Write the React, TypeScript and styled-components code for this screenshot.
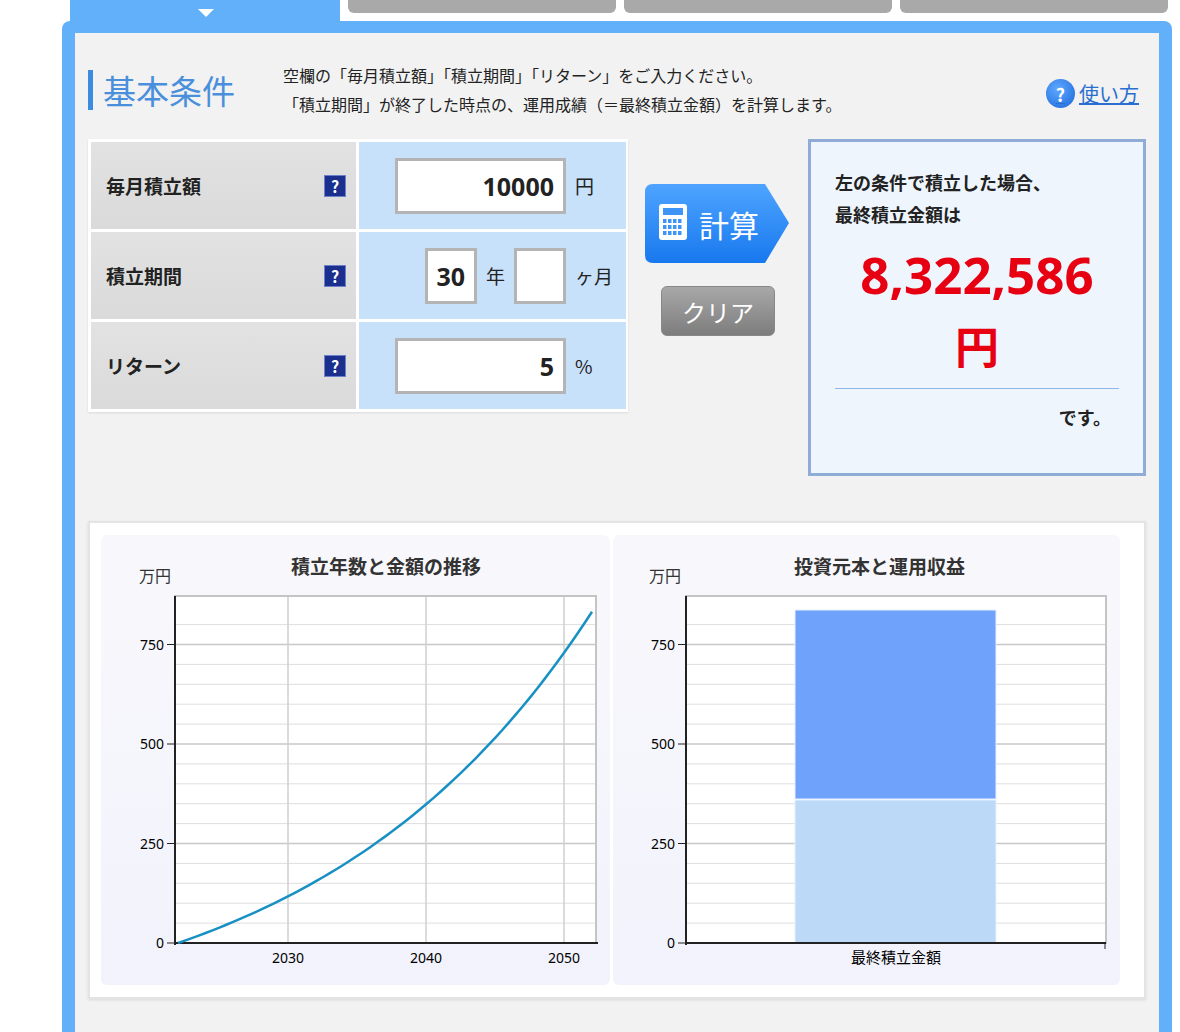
import React from "react";
import styled, { createGlobalStyle } from "styled-components";

const G = createGlobalStyle`
  body { margin:0; background:#fff; font-family: "Noto Sans CJK JP", "Noto Sans", sans-serif; color:#222; }
`;
const Page = styled.div`width:1180px;height:1032px;overflow:hidden;position:relative;`;
const Tabs = styled.div`display:flex;gap:8px;padding-left:70px;height:21px;`;
const Tab = styled.div<{ $active?: boolean }>`
  width:${p => (p.$active ? 270 : 268)}px;
  height:${p => (p.$active ? 21 : 13)}px;
  background:${p => (p.$active ? "#63b0fa" : "#a9a9a9")};
  border-radius:${p => (p.$active ? "0" : "0 0 6px 6px")};
  position:relative;
`;
const Tri = styled.div`position:absolute;left:128px;top:9px;width:0;height:0;border-left:8px solid transparent;border-right:8px solid transparent;border-top:8px solid #fff;`;
const Frame = styled.div`margin-left:62px;width:1110px;height:1040px;background:#63b0fa;border-radius:8px 8px 0 0;padding:12px 13px 0;box-sizing:border-box;`;
const Inner = styled.div`background:#f2f2f2;height:100%;padding:36px 13px 0;box-sizing:border-box;`;
const Header = styled.div`display:flex;align-items:flex-start;`;
const Title = styled.div`border-left:5px solid #3b8be0;padding-left:10px;font-size:33px;color:#4a8fdc;line-height:40px;width:180px;margin-top:1px;`;
const Desc = styled.div`font-size:16px;line-height:29px;margin-top:-8px;flex:1;`;
const Help = styled.div`display:flex;align-items:center;gap:4px;margin-top:10px;margin-right:7px;font-size:20px;color:#2a6fd0;text-decoration:underline;`;
const QCircle = styled.span`width:29px;height:29px;border-radius:50%;background:radial-gradient(circle at 40% 35%,#5ea8ff,#1a66d8);color:#fff;font-size:18px;font-weight:bold;display:flex;align-items:center;justify-content:center;text-decoration:none;`;
const Main = styled.div`display:flex;margin-top:20px;align-items:flex-start;`;
const Table = styled.div`width:540px;background:#fff;padding:3px;box-sizing:border-box;display:grid;grid-template-columns:265px 267px;gap:3px;box-shadow:0 1px 2px rgba(0,0,0,.1);`;
const Label = styled.div`height:87px;background:linear-gradient(#e2e2e2,#dadada);display:flex;align-items:center;justify-content:space-between;padding:0 10px 0 15px;font-size:19px;font-weight:bold;`;
const QIcon = styled.span`width:20px;height:20px;background:#1b2f8e;color:#fff;font-weight:bold;font-size:16px;display:flex;align-items:center;justify-content:center;border:1px solid #6d7fc8;`;
const Val = styled.div<{ $pl: number }>`height:87px;background:#c8e1fb;display:flex;align-items:center;padding-left:${p => p.$pl}px;gap:9px;font-size:19px;`;
const Input = styled.div<{ $w: number }>`width:${p => p.$w}px;height:56px;box-sizing:border-box;background:#fff;border:3px solid #b4b4b4;font-size:25px;font-weight:bold;display:flex;align-items:center;justify-content:flex-end;padding-right:9px;font-family:"Noto Sans", sans-serif;`;
const Btns = styled.div`width:180px;display:flex;flex-direction:column;align-items:center;padding-top:45px;gap:23px;`;
const CalcBtn = styled.div`width:144px;height:79px;position:relative;display:flex;align-items:center;box-sizing:border-box;color:#fff;font-size:30px;margin-left:-2px;`;
const ClearBtn = styled.div`width:114px;height:50px;border-radius:6px;background:linear-gradient(#a8a8a8,#7d7d7d);color:#fff;font-size:24px;display:flex;align-items:center;justify-content:center;border:1px solid #888;box-sizing:border-box;`;
const Result = styled.div`width:338px;height:337px;box-sizing:border-box;border:3px solid #8eacd6;background:#eef5fd;padding:24px 24px 0;font-weight:bold;font-size:18px;line-height:32px;`;
const Big = styled.div`color:#e60012;font-size:51px;text-align:center;line-height:72px;margin-top:8px;font-family:"Noto Sans", sans-serif;`;
const Yen = styled.div`color:#e60012;font-size:44px;text-align:center;line-height:70px;`;
const Rule = styled.div`border-top:1px solid #8fb8e8;margin-top:8px;`;
const Desu = styled.div`text-align:right;margin-top:12px;padding-right:8px;`;
const Charts = styled.div`margin-top:45px;width:1058px;height:478px;box-sizing:border-box;border:2px solid #e4e4e4;background:#fff;padding:12px 24px 12px 11px;display:flex;gap:3px;box-shadow:0 1px 3px rgba(0,0,0,.1);`;
const ChartBox = styled.div`flex:1;background:linear-gradient(#f8f8fc,#f2f2fc);border-radius:6px;`;

const gridLines = (x0: number, x1: number) =>
  Array.from({ length: 17 }, (_, i) => {
    const y = 408 - i * 19.9;
    return <line key={i} x1={x0} x2={x1} y1={y} y2={y} stroke={i % 5 === 0 ? "#c8c8c8" : "#dedede"} strokeWidth={i % 5 === 0 ? 1.5 : 1} />;
  });
const yLabels = (x: number) =>
  [0, 250, 500, 750].map((v, i) => (
    <g key={v}>
      <text x={x} y={413 - i * 99.5} fontSize="14" textAnchor="end" fontFamily="Noto Sans, sans-serif">{v}</text>
      <line x1={x + 3} x2={x + 10} y1={408 - i * 99.5} y2={408 - i * 99.5} stroke="#222" />
    </g>
  ));

function LineChart() {
  const pts: string[] = [];
  for (let m = 0; m <= 360; m += 6) {
    const r = 0.05 / 12;
    const v = (10000 * ((Math.pow(1 + r, m) - 1) / r)) / 10000;
    pts.push(`${77 + m * (414 / 360)},${408 - v * 0.398}`);
  }
  return (
    <svg width="509" height="449">
      <text x="190" y="39" fontSize="19" fontWeight="bold" fill="#333">積立年数と金額の推移</text>
      <text x="38" y="47" fontSize="16" fill="#333">万円</text>
      <rect x="74" y="61" width="421" height="347" fill="#fff" />
      {gridLines(74, 495)}
      {[187, 325, 463].map(x => <line key={x} x1={x} x2={x} y1={61} y2={408} stroke="#cfcfcf" strokeWidth="1.5" />)}
      <rect x="74" y="61" width="421" height="347" fill="none" stroke="#c4c4c4" strokeWidth="2" />
      <line x1="74" x2="74" y1="61" y2="410" stroke="#222" strokeWidth="2" />
      <line x1="74" x2="497" y1="408" y2="408" stroke="#222" strokeWidth="2" />
      {yLabels(63)}
      {[["2030", 187], ["2040", 325], ["2050", 463]].map(([t, x]) => (
        <text key={t} x={x} y="428" fontSize="14" textAnchor="middle" fontFamily="Noto Sans, sans-serif">{t}</text>
      ))}
      <polyline points={pts.join(" ")} fill="none" stroke="#1890c4" strokeWidth="2.5" />
    </svg>
  );
}
function BarChart() {
  return (
    <svg width="507" height="449">
      <text x="181" y="39" fontSize="19" fontWeight="bold" fill="#333">投資元本と運用収益</text>
      <text x="36" y="47" fontSize="16" fill="#333">万円</text>
      <rect x="73" y="61" width="420" height="347" fill="#fff" />
      {gridLines(73, 493)}
      <rect x="73" y="61" width="420" height="347" fill="none" stroke="#c4c4c4" strokeWidth="2" />
      <rect x="182" y="75" width="201" height="189" fill="#6ea2fb" stroke="#e8f0ff" />
      <rect x="182" y="265" width="201" height="143" fill="#bcd9f7" stroke="#e8f0ff" />
      <line x1="73" x2="73" y1="61" y2="410" stroke="#222" strokeWidth="2" />
      <line x1="73" x2="493" y1="408" y2="408" stroke="#222" strokeWidth="2" />
      <line x1="492" x2="492" y1="408" y2="414" stroke="#222" />
      {yLabels(62)}
      <text x="283" y="428" fontSize="15" textAnchor="middle">最終積立金額</text>
    </svg>
  );
}

export default function App() {
  return (
    <Page>
      <G />
      <Tabs>
        <Tab $active><Tri /></Tab>
        <Tab /><Tab /><Tab />
      </Tabs>
      <Frame>
        <Inner>
          <Header>
            <Title>基本条件</Title>
            <Desc>
              空欄の「毎月積立額」「積立期間」「リターン」をご入力ください。<br />
              「積立期間」が終了した時点の、運用成績（＝最終積立金額）を計算します。
            </Desc>
            <Help><QCircle>?</QCircle>使い方</Help>
          </Header>
          <Main>
            <Table>
              <Label>毎月積立額<QIcon>?</QIcon></Label>
              <Val $pl={36}><Input $w={171}>10000</Input><span>円</span></Val>
              <Label>積立期間<QIcon>?</QIcon></Label>
              <Val $pl={66}>
                <Input $w={52}>30</Input><span>年</span>
                <Input $w={52}></Input><span>ヶ月</span>
              </Val>
              <Label>リターン<QIcon>?</QIcon></Label>
              <Val $pl={36}><Input $w={171}>5</Input><span>%</span></Val>
            </Table>
            <Btns>
              <CalcBtn>
                <svg width="144" height="79" style={{ position: "absolute", left: 0, top: 0 }}>
                  <defs>
                    <linearGradient id="cb" x1="0" y1="0" x2="0" y2="1">
                      <stop offset="0" stopColor="#4ea4ff" /><stop offset="1" stopColor="#1878ee" />
                    </linearGradient>
                  </defs>
                  <path d="M8 0 H120 L144 39 L120 79 H8 Q0 79 0 71 V8 Q0 0 8 0 Z" fill="url(#cb)" />
                  <rect x="14" y="20" width="28" height="36" rx="3" fill="#fff" />
                  <rect x="18" y="24" width="20" height="7" fill="#3f95f5" />
                  {[0, 1, 2, 3].map(c => [0, 1, 2].map(r => (
                    <rect key={`${c}${r}`} x={18 + c * 5} y={35 + r * 6} width="3.5" height="4" fill="#3f95f5" />
                  )))}
                </svg>
                <span style={{ position: "relative", marginLeft: 54 }}>計算</span>
              </CalcBtn>
              <ClearBtn>クリア</ClearBtn>
            </Btns>
            <Result>
              左の条件で積立した場合、<br />最終積立金額は
              <Big>8,322,586</Big>
              <Yen>円</Yen>
              <Rule />
              <Desu>です。</Desu>
            </Result>
          </Main>
          <Charts>
            <ChartBox><LineChart /></ChartBox>
            <ChartBox><BarChart /></ChartBox>
          </Charts>
        </Inner>
      </Frame>
    </Page>
  );
}
